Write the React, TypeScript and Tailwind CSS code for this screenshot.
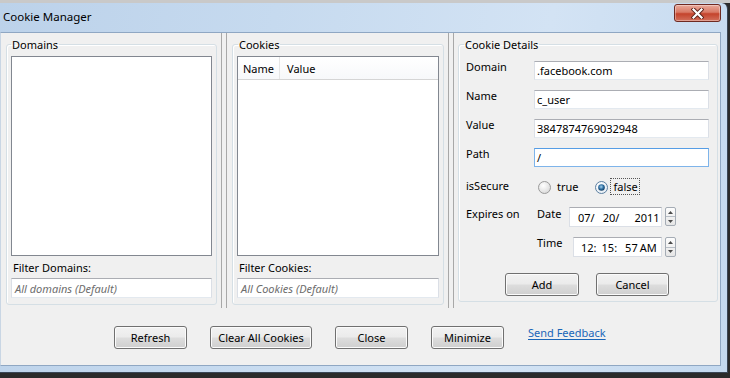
import React from "react";

function Btn({ w, children }: { w: string; children: React.ReactNode }) {
  return (
    <div
      className={`${w} h-[23px] shrink-0 rounded-[3px] border border-[#707070] bg-[linear-gradient(180deg,#f2f2f2_0%,#ebebeb_48%,#dddddd_52%,#cfcfcf_100%)] shadow-[inset_0_0_0_1px_#fbfbfb] flex items-center justify-center text-[11px] leading-[15px] text-black`}
    >
      {children}
    </div>
  );
}

function TextBox({
  w,
  h,
  children,
  focused,
  italic,
}: {
  w: string;
  h: string;
  children?: React.ReactNode;
  focused?: boolean;
  italic?: boolean;
}) {
  return (
    <div
      className={`${w} ${h} shrink-0 border bg-white flex items-center ${
        focused
          ? "border-[#7eb4ea] border-t-[#569de5]"
          : "border-[#dbdfe6] border-t-[#abadb3] border-b-[#e3e9ef]"
      } ${italic ? "italic text-[#6d6d6d] pl-[3px]" : "text-black pl-[2px]"} text-[11px] leading-[15px]`}
    >
      {children}
    </div>
  );
}

function Radio({ checked }: { checked?: boolean }) {
  return (
    <svg width="13" height="13" viewBox="0 0 13 13" className="shrink-0">
      <defs>
        <radialGradient id={checked ? "rgc" : "rgu"} cx="0.4" cy="0.35" r="0.7">
          <stop offset="0" stopColor="#ffffff" />
          <stop offset="1" stopColor={checked ? "#e4ecf4" : "#d8d8d8"} />
        </radialGradient>
        <radialGradient id="dot" cx="0.45" cy="0.4" r="0.6">
          <stop offset="0" stopColor="#a6d4f0" />
          <stop offset="0.6" stopColor="#2c6b9e" />
          <stop offset="1" stopColor="#133d62" />
        </radialGradient>
      </defs>
      <circle
        cx="6.5"
        cy="6.5"
        r="6"
        fill={checked ? "url(#rgc)" : "url(#rgu)"}
        stroke={checked ? "#5d7fa0" : "#9a9a9a"}
      />
      {checked && <circle cx="6.5" cy="6.5" r="3.3" fill="url(#dot)" />}
    </svg>
  );
}

function Spinner({ h }: { h: string }) {
  return (
    <div
      className={`w-[11px] ${h} ml-[3px] shrink-0 rounded-[2px] border border-[#a5acb5] bg-[linear-gradient(180deg,#fdfdfd,#e6e6e6)] flex flex-col`}
    >
      <div className="flex-1 flex items-center justify-center border-b border-[#b8bec6]">
        <svg width="5" height="3" viewBox="0 0 5 3">
          <path d="M0 3 L2.5 0 L5 3 Z" fill="#4a4a4a" />
        </svg>
      </div>
      <div className="flex-1 flex items-center justify-center">
        <svg width="5" height="3" viewBox="0 0 5 3">
          <path d="M0 0 L2.5 3 L5 0 Z" fill="#4a4a4a" />
        </svg>
      </div>
    </div>
  );
}

function Splitter() {
  return <div className="w-[6px] shrink-0 border-l border-r border-[#a8a8a8] bg-[#f0f0f0]" />;
}

export default function App() {
  return (
    <div className="w-[730px] h-[378px] overflow-hidden bg-[#2b2b2b] font-['Noto_Sans',sans-serif] text-black">
      <div className="h-[3px] bg-[#c9c9c9]" />
      <div className="w-[728px] h-[370px] rounded-tr-[6px] border-r border-b border-[#3a4656] bg-[linear-gradient(100deg,#bcd2ea_0%,#c6daef_35%,#d3e3f4_70%,#c4d9ef_100%)] flex flex-col">
        {/* title bar */}
        <div className="h-[29px] shrink-0 flex items-start justify-between">
          <div className="pl-[3px] pt-[6px] text-[11.5px] leading-[16px] text-black">Cookie Manager</div>
          <div className="mt-[1px] mr-[6px] w-[47px] h-[18px] rounded-[3px] border border-[#6e2a22] bg-[linear-gradient(180deg,#e9a99a_0%,#d97a66_45%,#c4432c_55%,#d2705c_100%)] shadow-[inset_0_0_0_1px_rgba(255,255,255,0.35)] flex items-center justify-center">
            <svg width="13" height="11" viewBox="0 0 13 11">
              <path d="M2.5 1.5 L10.5 9.5 M10.5 1.5 L2.5 9.5" stroke="#5a2018" strokeWidth="4" strokeLinecap="square" />
              <path d="M2.5 1.5 L10.5 9.5 M10.5 1.5 L2.5 9.5" stroke="#ffffff" strokeWidth="2.2" strokeLinecap="square" />
            </svg>
          </div>
        </div>

        {/* client area */}
        <div className="h-[334px] shrink-0 mr-[6px] bg-[#f0f0f0] border border-[#8fa7c3] border-l-[#c9d6e4] flex flex-col">
          {/* top section */}
          <div className="h-[275px] shrink-0 flex">
            {/* Domains */}
            <div className="w-[220px] shrink-0 pl-[5px] pt-[4px]">
              <fieldset className="w-[211px] border border-[#d5dfe5] rounded-[3px] shadow-[inset_1px_1px_0_#ffffff] pl-[4px] pb-[6px]">
                <legend className="px-[1px] text-[11px] leading-[15px]">Domains</legend>
                <div className="mt-[4px] w-[201px] h-[200px] border border-[#828790] bg-white" />
                <div className="mt-[4px] pl-[2px] text-[11px] leading-[15px]">Filter Domains:</div>
                <div className="mt-[3px]">
                  <TextBox w="w-[201px]" h="h-[20px]" italic>
                    All domains (Default)
                  </TextBox>
                </div>
              </fieldset>
            </div>

            <Splitter />

            {/* Cookies */}
            <div className="w-[221px] shrink-0 pl-[5px] pt-[4px]">
              <fieldset className="w-[212px] border border-[#d5dfe5] rounded-[3px] shadow-[inset_1px_1px_0_#ffffff] pl-[4px] pb-[6px]">
                <legend className="ml-[1px] px-[1px] text-[11px] leading-[15px]">Cookies</legend>
                <div className="mt-[4px] w-[202px] h-[200px] border border-[#828790] bg-white flex flex-col">
                  <div className="h-[23px] shrink-0 flex border-b border-[#d5d5d5] bg-[linear-gradient(180deg,#ffffff,#f7f8fa)] text-[11px] leading-[15px]">
                    <div className="w-[42px] pl-[5px] flex items-center border-r border-[#e5e5e5]">Name</div>
                    <div className="pl-[7px] flex items-center">Value</div>
                  </div>
                </div>
                <div className="mt-[4px] pl-[2px] text-[11px] leading-[15px]">Filter Cookies:</div>
                <div className="mt-[3px]">
                  <TextBox w="w-[202px]" h="h-[20px]" italic>
                    All Cookies (Default)
                  </TextBox>
                </div>
              </fieldset>
            </div>

            <Splitter />

            {/* Cookie Details */}
            <div className="w-[265px] shrink-0 pl-[4px] pt-[4px]">
              <fieldset className="w-[260px] border border-[#d5dfe5] rounded-[3px] shadow-[inset_1px_1px_0_#ffffff] pl-[7px] pb-[5px] text-[11px] leading-[15px]">
                <legend className="-ml-[2px] px-[1px]">Cookie Details</legend>
                <div className="mt-[9px] flex items-start">
                  <div className="w-[68px] shrink-0 -mt-[2px]">Domain</div>
                  <TextBox w="w-[175px]" h="h-[19px]">.facebook.com</TextBox>
                </div>
                <div className="mt-[10px] flex items-start">
                  <div className="w-[68px] shrink-0 -mt-[2px]">Name</div>
                  <TextBox w="w-[175px]" h="h-[19px]">c_user</TextBox>
                </div>
                <div className="mt-[10px] flex items-start">
                  <div className="w-[68px] shrink-0 -mt-[2px]">Value</div>
                  <TextBox w="w-[175px]" h="h-[19px]">3847874769032948</TextBox>
                </div>
                <div className="mt-[10px] flex items-start">
                  <div className="w-[68px] shrink-0 -mt-[2px]">Path</div>
                  <TextBox w="w-[175px]" h="h-[19px]" focused>
                    /
                  </TextBox>
                </div>
                <div className="mt-[10px] h-[19px] flex items-center">
                  <div className="w-[68px] shrink-0 -mt-[3px]">isSecure</div>
                  <div className="ml-[4px] mt-[1px]">
                    <Radio />
                  </div>
                  <div className="ml-[6px]">true</div>
                  <div className="ml-[16px] mt-[1px]">
                    <Radio checked />
                  </div>
                  <div className="ml-[2px] h-[17px] pl-[3px] pr-[1px] border border-dotted border-[#555555] flex items-center">
                    false
                  </div>
                </div>
                <div className="mt-[11px] flex items-start">
                  <div className="w-[68px] shrink-0 -mt-[1px]">Expires on</div>
                  <div className="ml-[3px] w-[32px] shrink-0 -mt-[1px]">Date</div>
                  <div className="w-[93px] h-[20px] shrink-0 border border-[#dbdfe6] border-t-[#abadb3] bg-white flex items-center pl-[8px]">
                    <span>07/</span>
                    <span className="ml-[8px]">20/</span>
                    <span className="ml-[15px]">2011</span>
                  </div>
                  <Spinner h="h-[19px]" />
                </div>
                <div className="mt-[10px] flex items-start">
                  <div className="w-[68px] shrink-0" />
                  <div className="ml-[3px] w-[36px] shrink-0 -mt-[2px]">Time</div>
                  <div className="w-[89px] h-[20px] shrink-0 border border-[#dbdfe6] border-t-[#abadb3] bg-white flex items-center pl-[7px]">
                    <span>12:</span>
                    <span className="ml-[5px]">15:</span>
                    <span className="ml-[8px]">57</span>
                    <span className="ml-[2px]">AM</span>
                  </div>
                  <Spinner h="h-[20px]" />
                </div>
                <div className="mt-[16px] flex">
                  <div className="ml-[39px]">
                    <Btn w="w-[74px]">Add</Btn>
                  </div>
                  <div className="ml-[17px]">
                    <Btn w="w-[73px]">Cancel</Btn>
                  </div>
                </div>
              </fieldset>
            </div>
          </div>

          {/* bottom buttons */}
          <div className="pt-[18px] pl-[113px] flex items-start gap-[23px]">
            <Btn w="w-[73px]">Refresh</Btn>
            <Btn w="w-[102px]">Clear All Cookies</Btn>
            <Btn w="w-[73px]">Close</Btn>
            <Btn w="w-[73px]">Minimize</Btn>
            <div className="ml-[1px] -mt-[1px] text-[11px] leading-[15px] text-[#1a66b8] underline underline-offset-[2px]">
              Send Feedback
            </div>
          </div>
        </div>
      </div>
    </div>
  );
}
